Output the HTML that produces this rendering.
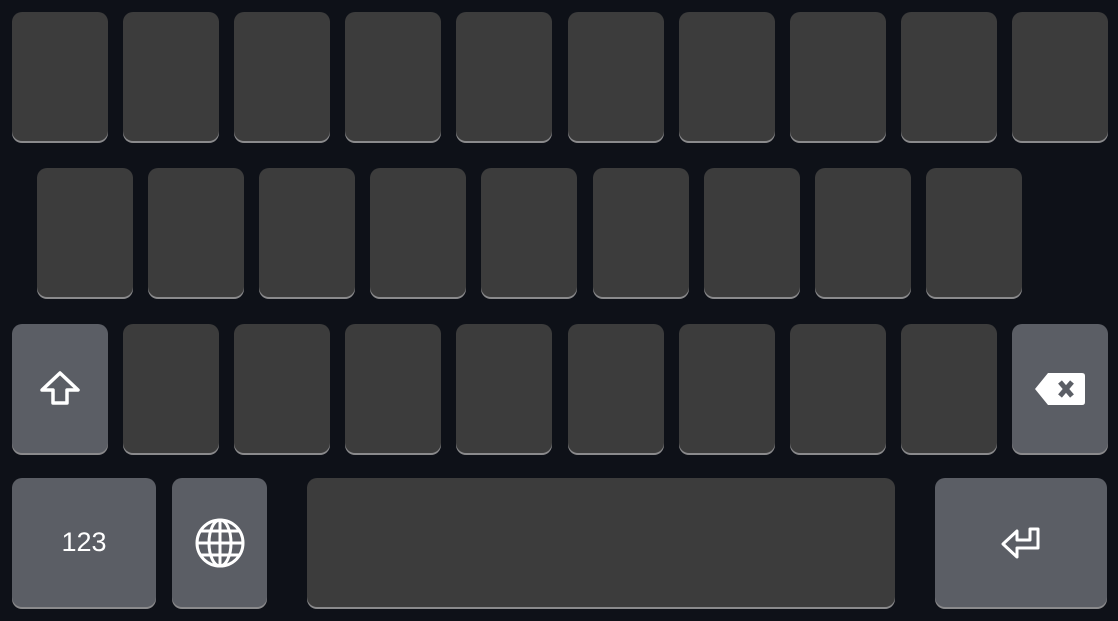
<!DOCTYPE html><html><head><style>
body{margin:0;width:1118px;height:621px;background:#0e1118;position:relative;overflow:hidden;font-family:"Liberation Sans",sans-serif}
.k{position:absolute;width:96px;height:129px;background:#3c3c3c;border-radius:10px;box-shadow:0 2px 0 #8a8a8c;display:flex;align-items:center;justify-content:center;color:#fff}
.s{background:#5b5e65}
</style></head><body>
<div id="r"></div>
<script>
var h='';
for(var i=0;i<10;i++)h+='<div class="k" style="left:'+Math.round(12+i*111.11)+'px;top:12px"></div>';
for(var i=0;i<9;i++)h+='<div class="k" style="left:'+Math.round(37+i*111.11)+'px;top:168px"></div>';
for(var i=1;i<9;i++)h+='<div class="k" style="left:'+Math.round(12+i*111.11)+'px;top:324px"></div>';
document.getElementById('r').innerHTML=h;
</script>
<div class="k s" style="left:12px;top:324px"><svg width="42" height="38" viewBox="0 0 42 38"><path d="M21 3 L39 20 L28 20 L28 33 L14 33 L14 20 L3 20 Z" fill="none" stroke="#fff" stroke-width="3.5" stroke-linejoin="round"/></svg></div>
<div class="k s" style="left:1012px;top:324px"><svg width="52" height="36" viewBox="0 0 52 36"><path d="M14 2 L48 2 Q51 2 51 5 L51 31 Q51 34 48 34 L14 34 L1 18 Z" fill="#fff"/><path d="M26 11 L38 25 M38 11 L26 25" stroke="#5b5e65" stroke-width="5"/></svg></div>
<div class="k s" style="left:12px;top:478px;width:144px;font-size:27px">123</div>
<div class="k s" style="left:172px;top:478px;width:95px"><svg width="50" height="50" viewBox="0 0 50 50" fill="none" stroke="#fff" stroke-width="3"><circle cx="25" cy="25" r="23"/><ellipse cx="25" cy="25" rx="11" ry="23"/><line x1="25" y1="2" x2="25" y2="48"/><line x1="2" y1="25" x2="48" y2="25"/><path d="M6 13 H44 M6 37 H44"/></svg></div>
<div class="k" style="left:307px;top:478px;width:588px"></div>
<div class="k s" style="left:935px;top:478px;width:172px"><svg width="42" height="34" viewBox="0 0 42 34"><path d="M38 3 L38 22 L17 22 L17 31 L3 18 L17 5 L17 14 L30 14 L30 3 Z" fill="none" stroke="#fff" stroke-width="3" stroke-linejoin="round"/></svg></div>
</body></html>
